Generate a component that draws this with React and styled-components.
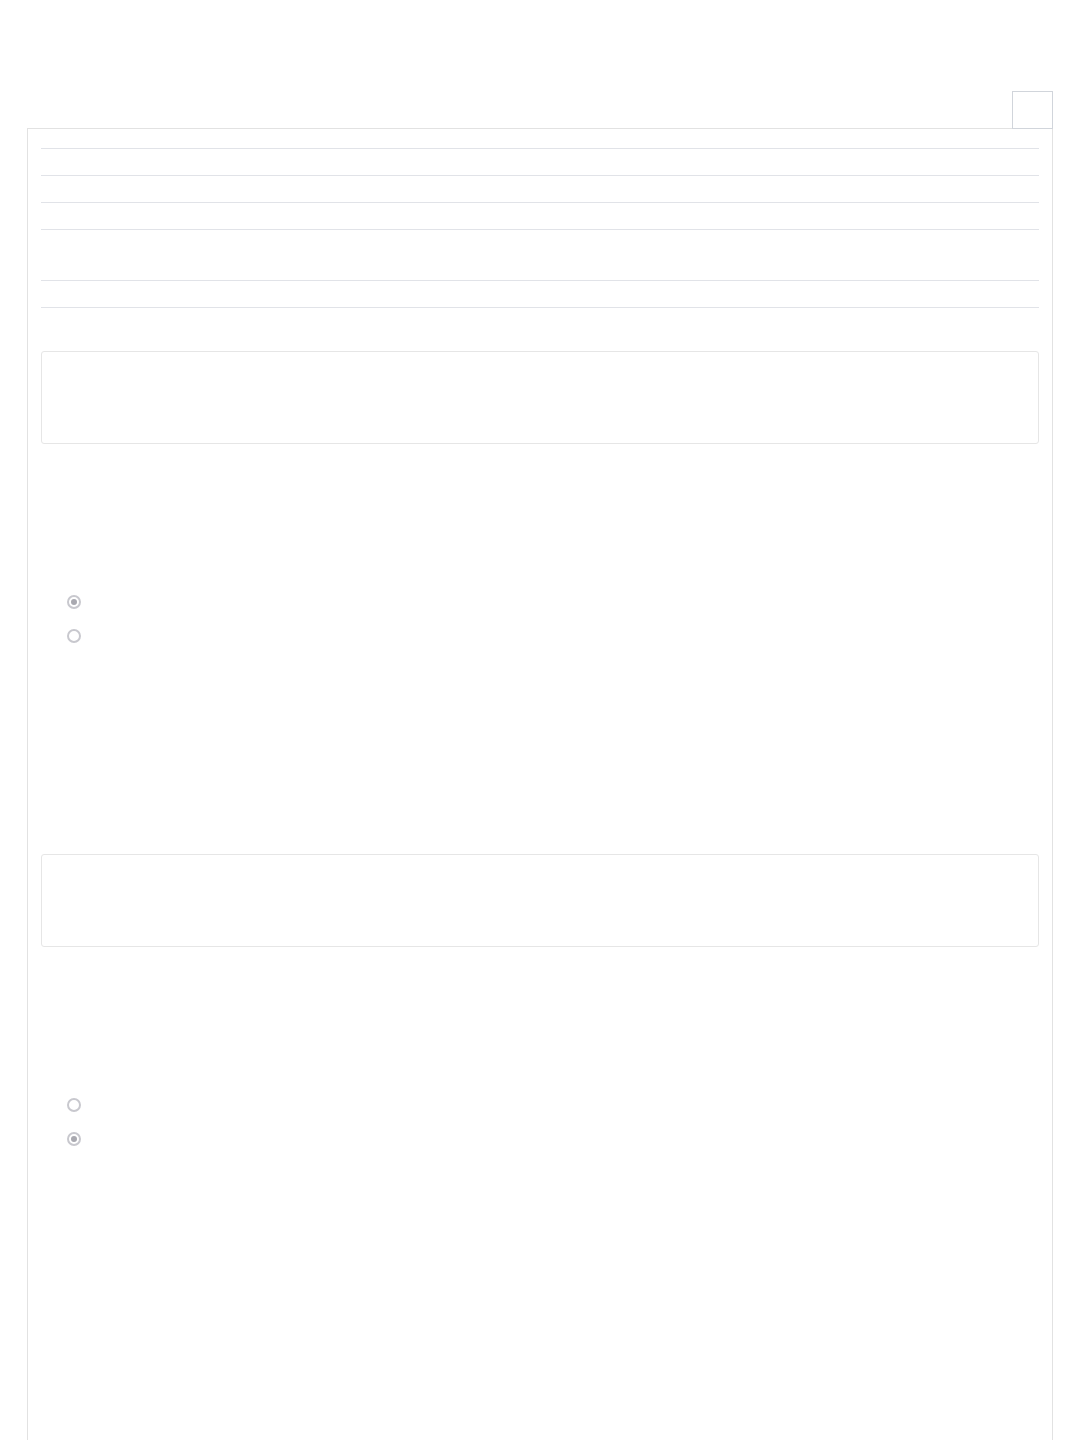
import styled, { createGlobalStyle } from "styled-components";

const GlobalStyle = createGlobalStyle`
  html, body {
    margin: 0;
    padding: 0;
    background: #ffffff;
    font-family: "Liberation Sans", Arial, sans-serif;
  }
`;

const Page = styled.div`
  box-sizing: border-box;
  min-height: 1440px;
  padding: 91px 27px 0 27px;
  overflow: hidden;
`;

const Toolbar = styled.div`
  display: flex;
  justify-content: flex-end;
`;

const ToolButton = styled.button`
  box-sizing: border-box;
  width: 41px;
  height: 38px;
  padding: 0;
  border: 1px solid #d1d5db;
  border-radius: 0;
  background: #ffffff;
  position: relative;
  z-index: 1;
`;

const Panel = styled.div`
  box-sizing: border-box;
  margin-top: -1px;
  min-height: 1340px;
  padding: 19px 13px 0 13px;
  border: 1px solid #e2e2e2;
  border-bottom: none;
`;

const Table = styled.div`
  display: flex;
  flex-direction: column;
  margin-bottom: 43px;
`;

const Row = styled.div`
  box-sizing: border-box;
  height: ${(p) => p.h}px;
  border-top: 1px solid #e1e3e8;
  border-bottom: ${(p) => (p.last ? "1px solid #e1e3e8" : "none")};
`;

const Section = styled.section`
  display: flex;
  flex-direction: column;
  padding-bottom: 211px;
`;

const Field = styled.div`
  box-sizing: border-box;
  height: 93px;
  border: 1px solid #e6e6e6;
  border-radius: 3px;
  background: #ffffff;
`;

const RadioGroup = styled.div`
  display: flex;
  flex-direction: column;
  gap: 20px;
  padding: 151px 0 0 26px;
`;

const RadioRow = styled.label`
  display: flex;
  align-items: center;
  height: 14px;
`;

const Radio = styled.input.attrs({ type: "radio", disabled: true })`
  appearance: none;
  box-sizing: border-box;
  width: 14px;
  height: 14px;
  margin: 0;
  border: 2px solid #c8c8ce;
  border-radius: 50%;
  background: #ffffff;
  display: grid;
  place-items: center;

  &:checked::after {
    content: "";
    width: 6px;
    height: 6px;
    border-radius: 50%;
    background: #a9a9b0;
  }
`;

const rows = [27, 27, 27, 51, 28];

const sections = [
  { name: "a", checked: 0 },
  { name: "b", checked: 1 },
];

export default function App() {
  return (
    <Page>
      <GlobalStyle />
      <Toolbar>
        <ToolButton aria-label="" />
      </Toolbar>
      <Panel>
        <Table>
          {rows.map((h, i) => (
            <Row key={i} h={h} last={i === rows.length - 1} />
          ))}
        </Table>
        {sections.map((s) => (
          <Section key={s.name}>
            <Field />
            <RadioGroup>
              {[0, 1].map((i) => (
                <RadioRow key={i}>
                  <Radio name={s.name} defaultChecked={s.checked === i} />
                </RadioRow>
              ))}
            </RadioGroup>
          </Section>
        ))}
      </Panel>
    </Page>
  );
}
